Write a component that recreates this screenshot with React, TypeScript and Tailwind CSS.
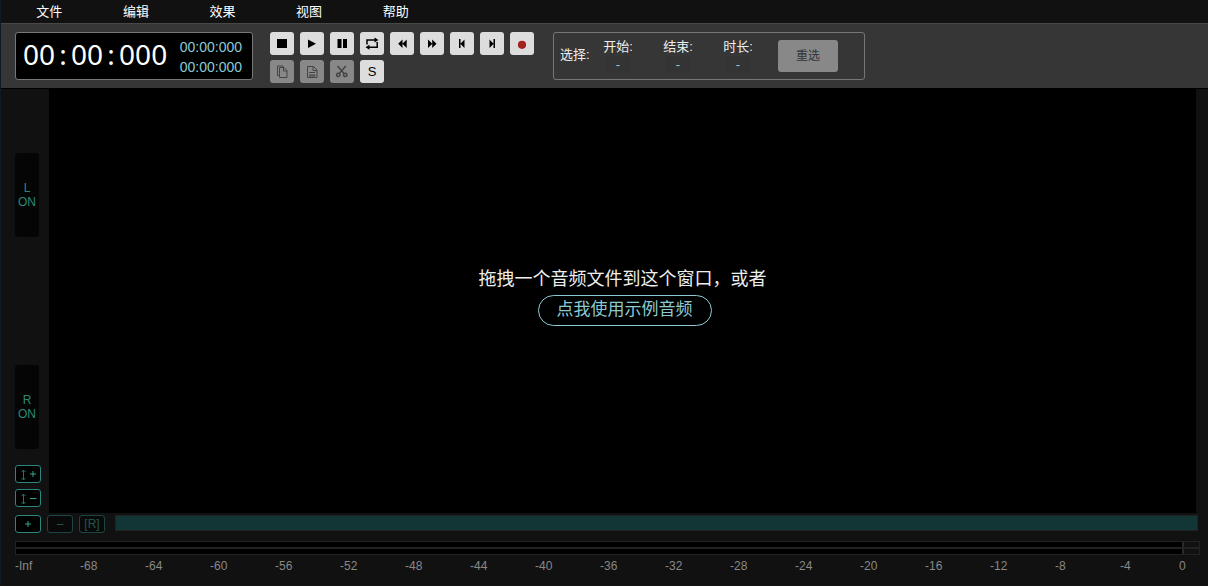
import type { ReactNode } from 'react';

const menus = ['文件', '编辑', '效果', '视图', '帮助'];

const decibels = [
  '-Inf', '-68', '-64', '-60', '-56', '-52', '-48', '-44', '-40',
  '-36', '-32', '-28', '-24', '-20', '-16', '-12', '-8', '-4',
];

const selectionFields = ['开始:', '结束:', '时长:'];

interface ToolButtonProps {
  label: string;
  disabled?: boolean;
  children: ReactNode;
}

function ToolButton({ label, disabled, children }: ToolButtonProps) {
  return (
    <button
      type="button"
      aria-label={label}
      title={label}
      disabled={disabled}
      className={`flex h-[23px] w-6 items-center justify-center rounded-[3px] text-xs ${
        disabled ? 'bg-[#888] text-[#444]' : 'bg-[#ddd] text-black hover:bg-white'
      }`}
    >
      {children}
    </button>
  );
}

// Solid glyphs on a 24x23 grid
function Glyph({ d, className = 'fill-current' }: { d: string; className?: string }) {
  return (
    <svg className={`h-[23px] w-6 ${className}`} viewBox="0 0 24 23" aria-hidden="true">
      <path d={d} />
    </svg>
  );
}

const outline = 'fill-none stroke-current stroke-1';

function Transport() {
  return (
    <div className="flex w-[264px] flex-wrap gap-x-1.5 gap-y-[5px]">
      <ToolButton label="停止"><Glyph d="M7 7h10v9H7z" /></ToolButton>
      <ToolButton label="播放"><Glyph d="M8 7.500L16 11.700L8 16z" /></ToolButton>
      <ToolButton label="暂停"><Glyph d="M7.500 7h4v9h-4zM13 7h4v9h-4z" /></ToolButton>
      <ToolButton label="循环">
        <svg className="h-[23px] w-6" viewBox="0 0 24 23" aria-hidden="true">
          <path className="fill-none stroke-current stroke-[1.5]" d="M7 12.500V8h9M17.200 10v5.200H8.500" />
          <path className="fill-current" d="M14.500 5.500L18.500 8L14.500 10.500zM9.500 12.700L5.500 15.200L9.500 17.700z" />
        </svg>
      </ToolButton>
      <ToolButton label="快退"><Glyph d="M12.500 7.500v8.500L8.200 11.700zM16.700 7.500v8.500L12.400 11.700z" /></ToolButton>
      <ToolButton label="快进"><Glyph d="M8 7.500v8.500L12.300 11.700zM12.200 7.500v8.500L16.500 11.700z" /></ToolButton>
      <ToolButton label="跳到开头"><Glyph d="M9 7h1.500v9H9zM14.500 7.500v8.500L10.300 11.700z" /></ToolButton>
      <ToolButton label="跳到结尾"><Glyph d="M13.500 7H15v9h-1.500zM9.500 7.500v8.500L13.700 11.700z" /></ToolButton>
      <ToolButton label="录音">
        <Glyph className="fill-[#a52222]" d="M12 8.700a4.100 4.100 0 1 1 0 8.200a4.100 4.100 0 1 1 0-8.200z" />
      </ToolButton>
      <ToolButton label="复制" disabled>
        <Glyph className={outline} d="M9.500 7.500h4.500l3 3v7h-7.500zM13.500 7.500v3.500h3.500M9 15.500H7.500v-9.500h5.500v1.500" />
      </ToolButton>
      <ToolButton label="粘贴" disabled>
        <Glyph className={outline} d="M7.500 6.500h6l3.500 3.500v7.500h-9.500zM13 6.500v4h4M9 12.500h6M9 15h6v1h-6" />
      </ToolButton>
      <ToolButton label="剪切" disabled>
        <Glyph
          className="fill-none stroke-current stroke-[1.500]"
          d="M7.500 6l7 8M15.800 6l-7 8M8.200 13.200a1.700 1.700 0 1 0 .1 3.400a1.700 1.700 0 1 0-.1-3.400M15.200 13.200a1.700 1.700 0 1 0 .1 3.400a1.700 1.700 0 1 0-.1-3.400"
        />
      </ToolButton>
      <ToolButton label="静音检测"><span className="pt-px text-[13px] leading-4">S</span></ToolButton>
    </div>
  );
}

function TimeDisplay() {
  return (
    <div className="flex h-12 w-[238px] items-center justify-between rounded-[3px] border border-[#777] bg-black pr-2.5 pl-[7px]">
      <div className="flex pb-1 font-['Noto_Sans',sans-serif] text-[28px] leading-9 text-white">
        <span>00</span>
        <span className="w-4 text-center">:</span>
        <span>00</span>
        <span className="w-4 text-center">:</span>
        <span>000</span>
      </div>
      <div className="pt-0.5 text-sm leading-5 text-[#8ccad2]">
        <div>00:00:000</div>
        <div>00:00:000</div>
      </div>
    </div>
  );
}

function SelectionPanel() {
  return (
    <div className="flex h-12 w-[312px] rounded-[3px] border border-[#777] pl-1.5 text-[13px] text-[#eee]">
      <span className="w-7 self-center pb-0.5 leading-5 whitespace-nowrap">选择:</span>
      {selectionFields.map((field) => (
        <div key={field} className="flex w-[60px] flex-col items-center pt-[5px]">
          <span className="leading-[18px]">{field}</span>
          <span className="h-[18px] w-6 bg-[#343434] text-center leading-[18px] text-[#8ccad2]">-</span>
        </div>
      ))}
      <button type="button" disabled className="ml-2.5 h-8 w-[60px] self-center rounded-[3px] bg-[#888] text-xs text-[#333]">
        重选
      </button>
    </div>
  );
}

function ChannelToggle({ channel }: { channel: string }) {
  return (
    <button type="button" className="h-[84px] w-6 rounded-[3px] bg-[#050505] text-xs leading-[14px] text-[#2b8878]">
      {channel}
      <br />
      ON
    </button>
  );
}

function ZoomButton({ label, disabled, children }: ToolButtonProps) {
  return (
    <button
      type="button"
      aria-label={label}
      disabled={disabled}
      className={`flex h-[18px] w-[26px] items-center justify-center rounded-[3px] border border-[#2a8780] bg-black text-xs leading-4 text-[#35a58c] ${
        disabled ? 'opacity-45' : ''
      }`}
    >
      {children}
    </button>
  );
}

function VerticalZoomIcon({ plus }: { plus?: boolean }) {
  return (
    <svg className="h-4 w-6 fill-none" viewBox="0 0 24 16" aria-hidden="true">
      <path className="stroke-[#20706f]" d="M7.500 4v10M5.500 6l2-2l2 2M5.500 12l2 2l2-2" />
      <path className="stroke-[#35a58c]" d={plus ? 'M14 8h6M17 5v6' : 'M14 8.500h6.500'} />
    </svg>
  );
}

export default function App() {
  return (
    <div className="flex min-h-screen flex-col border-l border-[#0d1c24] bg-[#111] font-['Liberation_Sans','Noto_Sans_CJK_SC',sans-serif]">
      <nav className="h-[23px]">
        <div className="ml-[5px] grid w-[433px] grid-cols-5">
          {menus.map((menu) => (
            <button key={menu} type="button" className="h-[23px] text-[13px] leading-6 text-white hover:bg-[#333]">
              {menu}
            </button>
          ))}
        </div>
      </nav>

      <header className="flex items-start border-t border-b border-t-[#484848] border-b-black bg-[#363636] px-3.5 pt-2 pb-[5px]">
        <TimeDisplay />
        <div className="mr-[19px] ml-[17px]">
          <Transport />
        </div>
        <SelectionPanel />
      </header>

      <main className="flex flex-1">
        <aside className="flex w-12 flex-col">
          <div className="flex flex-1 items-center pl-3.5">
            <ChannelToggle channel="L" />
          </div>
          <div className="grid flex-1 grid-rows-[1fr_auto_1fr] pl-3.5">
            <div />
            <ChannelToggle channel="R" />
            <div className="flex flex-col gap-1.5 pt-4">
              <ZoomButton label="垂直放大"><VerticalZoomIcon plus /></ZoomButton>
              <ZoomButton label="垂直缩小"><VerticalZoomIcon /></ZoomButton>
            </div>
          </div>
        </aside>
        <section className="mr-3 flex flex-1 flex-col items-center justify-center bg-black pb-3">
          <p className="text-lg leading-7 text-[#eee]">拖拽一个音频文件到这个窗口，或者</p>
          <button type="button" className="mt-0.5 ml-1 h-[31px] rounded-full border border-[#8ccad2] px-[18px] text-[17px] leading-7 text-[#8ccad2]">
            点我使用示例音频
          </button>
        </section>
      </main>

      <footer className="pr-2 pb-2.5 pl-3.5">
        <div className="flex gap-1.5 pt-0.5 pr-0.5">
          <ZoomButton label="放大">
            <svg className="h-4 w-6 fill-none stroke-current" viewBox="0 0 24 16" aria-hidden="true">
              <path d="M9 8h6M12 5v6" />
            </svg>
          </ZoomButton>
          <ZoomButton label="缩小" disabled>
            <svg className="h-4 w-6 fill-none stroke-current" viewBox="0 0 24 16" aria-hidden="true">
              <path d="M9 8.500h6.500" />
            </svg>
          </ZoomButton>
          <ZoomButton label="重置缩放" disabled>[R]</ZoomButton>
          <div className="ml-1 h-4 flex-1 border border-[#222] bg-[#123636]" />
        </div>

        {/* Level meters, one bar per channel */}
        <div className="mt-2 flex h-3.5 flex-col gap-0.5 border border-[#222] bg-[#222]">
          {['L', 'R'].map((channel) => (
            <div key={channel} className="flex flex-1">
              <div className="flex-1 bg-black" />
              <div className="w-[17px] border-l-2 border-[#2a2a2a] bg-[#111]" />
            </div>
          ))}
        </div>
        <div className="flex pt-0.5 text-xs leading-[19px] text-[#888]">
          {decibels.map((db) => (
            <span key={db} className="flex-1">{db}</span>
          ))}
          <span className="-ml-1.5 w-[21px]">0</span>
        </div>
      </footer>
    </div>
  );
}
